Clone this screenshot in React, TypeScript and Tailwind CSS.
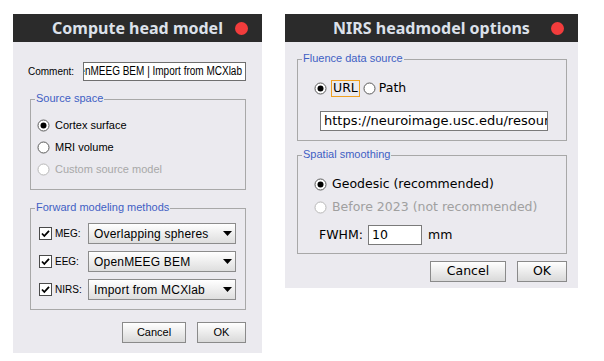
import type { ReactNode } from 'react';

const ARIAL = "font-['Liberation_Sans',Arial,sans-serif]";
const DEJAVU = "font-['DejaVu_Sans',sans-serif]";

/** 라디오 버튼 (선택/비활성 상태) */
function Radio({ checked = false, disabled = false }: { checked?: boolean; disabled?: boolean }) {
  return (
    <svg width="13" height="13" viewBox="0 0 13 13" className="shrink-0">
      <circle cx="6.5" cy="6.5" r="5.5" fill="#fff" stroke={disabled ? '#b8b8b8' : '#5a5a5a'} />
      {checked && <circle cx="6.5" cy="6.5" r="3" fill="#000" />}
    </svg>
  );
}

function Checkbox() {
  return (
    <svg width="13" height="13" viewBox="0 0 13 13" className="shrink-0">
      <rect x="0.5" y="0.5" width="12" height="12" fill="#fff" stroke="#4a4a4a" />
      <path d="M3 6.5 L5.3 9 L10 3.8" fill="none" stroke="#000" strokeWidth="1.8" />
    </svg>
  );
}

function Combo({ value }: { value: string }) {
  return (
    <div className="flex h-[21px] w-[148px] items-center justify-between border border-[#8c8c8c] bg-gradient-to-b from-white to-[#dedede] pl-[5px] pr-[3px] text-[12px] text-black">
      <span className="tracking-[0.2px]">{value}</span>
      <svg width="9" height="5" viewBox="0 0 9 5">
        <path d="M0 0 H9 L4.5 5 Z" fill="#000" />
      </svg>
    </div>
  );
}

/** 그룹 박스 (테두리 + 파란 제목) */
function Group({ title, className, children }: { title: string; className: string; children: ReactNode }) {
  return (
    <div className={`relative border border-[#a8a8a8] ${className}`}>
      <span className={`absolute -top-[8px] left-[4px] bg-[#ebeaef] px-[1px] text-[11px] leading-[13px] text-[#3f5fc4] ${ARIAL}`}>
        {title}
      </span>
      {children}
    </div>
  );
}

function TitleBar({ title }: { title: string }) {
  return (
    <div className="relative flex h-[28px] items-center justify-center bg-[#2b2b2b]">
      <span className="font-['Noto_Sans',sans-serif] text-[16px] font-bold leading-none text-[#dce1ea]">{title}</span>
      <span className="absolute right-[14px] top-[8px] h-[13px] w-[13px] rounded-full bg-[#f23c3c]" />
    </div>
  );
}

function Button({ label, className }: { label: string; className: string }) {
  return (
    <div className={`flex h-[21px] items-center justify-center border border-[#8a8a8a] bg-gradient-to-b from-white to-[#d9d9d9] text-black ${className}`}>
      {label}
    </div>
  );
}

export default function App() {
  return (
    <div className="flex h-[361px] w-[604px] items-start gap-[23px] bg-white pl-[13px] pt-[14px]">
      {/* Compute head model */}
      <div className={`flex h-[339px] w-[249px] flex-col bg-[#ebeaef] ${ARIAL}`}>
        <TitleBar title="Compute head model" />

        <div className="mt-[20px] flex items-center pl-[15px]">
          <span className="w-[55px] text-[10px] text-black">Comment:</span>
          <div className="flex h-[19px] w-[163px] justify-end overflow-hidden border border-[#6f6f6f] bg-white pr-[3px] text-[12.5px] leading-[17px] text-black">
            <span className="origin-right scale-x-[0.8] whitespace-nowrap">OpenMEEG BEM | Import from MCXlab</span>
          </div>
        </div>

        <Group title="Source space" className="ml-[17px] mt-[18px] w-[216px] pb-[9px] pl-[6px] pt-[14px]">
          <div className="flex h-[22px] items-center gap-[5px] text-[11px] text-black">
            <Radio checked />
            <span>Cortex surface</span>
          </div>
          <div className="flex h-[22px] items-center gap-[5px] text-[11px] text-black">
            <Radio />
            <span>MRI volume</span>
          </div>
          <div className="flex h-[22px] items-center gap-[5px] text-[11px] text-[#a8a8a8]">
            <Radio disabled />
            <span>Custom source model</span>
          </div>
        </Group>

        <Group title="Forward modeling methods" className="ml-[17px] mt-[18px] flex w-[216px] flex-col gap-[7px] pb-[9px] pl-[8px] pt-[14px]">
          {[
            ['MEG:', 'Overlapping spheres'],
            ['EEG:', 'OpenMEEG BEM'],
            ['NIRS:', 'Import from MCXlab'],
          ].map(([label, value]) => (
            <div key={label} className="flex items-center">
              <Checkbox />
              <span className="ml-[3px] w-[33px] text-[10px] text-black">{label}</span>
              <Combo value={value} />
            </div>
          ))}
        </Group>

        <div className="mt-[12px] flex justify-end gap-[11px] pr-[16px] text-[11px]">
          <Button label="Cancel" className="w-[64px]" />
          <Button label="OK" className="w-[49px]" />
        </div>
      </div>

      {/* NIRS headmodel options */}
      <div className={`flex h-[274px] w-[293px] flex-col bg-[#ebeaef] ${DEJAVU}`}>
        <TitleBar title="NIRS headmodel options" />

        <Group title="Fluence data source" className="ml-[12px] mt-[17px] w-[270px] pb-[9px] pt-[20px]">
          <div className="flex h-[17px] items-center pl-[16px] text-[12.5px] text-black">
            <Radio checked />
            <span className="ml-[4px] flex h-[17px] items-center border border-[#f0a020] px-[1px]">URL</span>
            <span className="ml-[3px]">
              <Radio />
            </span>
            <span className="ml-[3px]">Path</span>
          </div>
          <div className="ml-[22px] mt-[14px] flex h-[20px] w-[228px] items-center overflow-hidden border border-[#7a7a7a] bg-white pl-[3px] text-[13px] text-black">
            <span className="whitespace-nowrap">https://neuroimage.usc.edu/resources</span>
          </div>
        </Group>

        <Group title="Spatial smoothing" className="ml-[12px] mt-[14px] w-[270px] pb-[8px] pt-[17px]">
          <div className="flex h-[23px] items-center gap-[5px] pl-[16px] text-[12.5px] text-black">
            <Radio checked />
            <span>Geodesic (recommended)</span>
          </div>
          <div className="flex h-[23px] items-center gap-[5px] pl-[16px] text-[12.5px] text-[#a0a0a0]">
            <Radio disabled />
            <span>Before 2023 (not recommended)</span>
          </div>
          <div className="mt-[6px] flex items-center pl-[21px] text-[12.5px] text-black">
            <span className="w-[49px]">FWHM:</span>
            <div className="flex h-[20px] w-[54px] items-center border border-[#7a7a7a] bg-white pl-[3px]">10</div>
            <span className="ml-[6px]">mm</span>
          </div>
        </Group>

        <div className="mt-[7px] flex justify-end gap-[11px] pr-[11px] text-[12.5px]">
          <Button label="Cancel" className="w-[76px]" />
          <Button label="OK" className="w-[50px]" />
        </div>
      </div>
    </div>
  );
}
